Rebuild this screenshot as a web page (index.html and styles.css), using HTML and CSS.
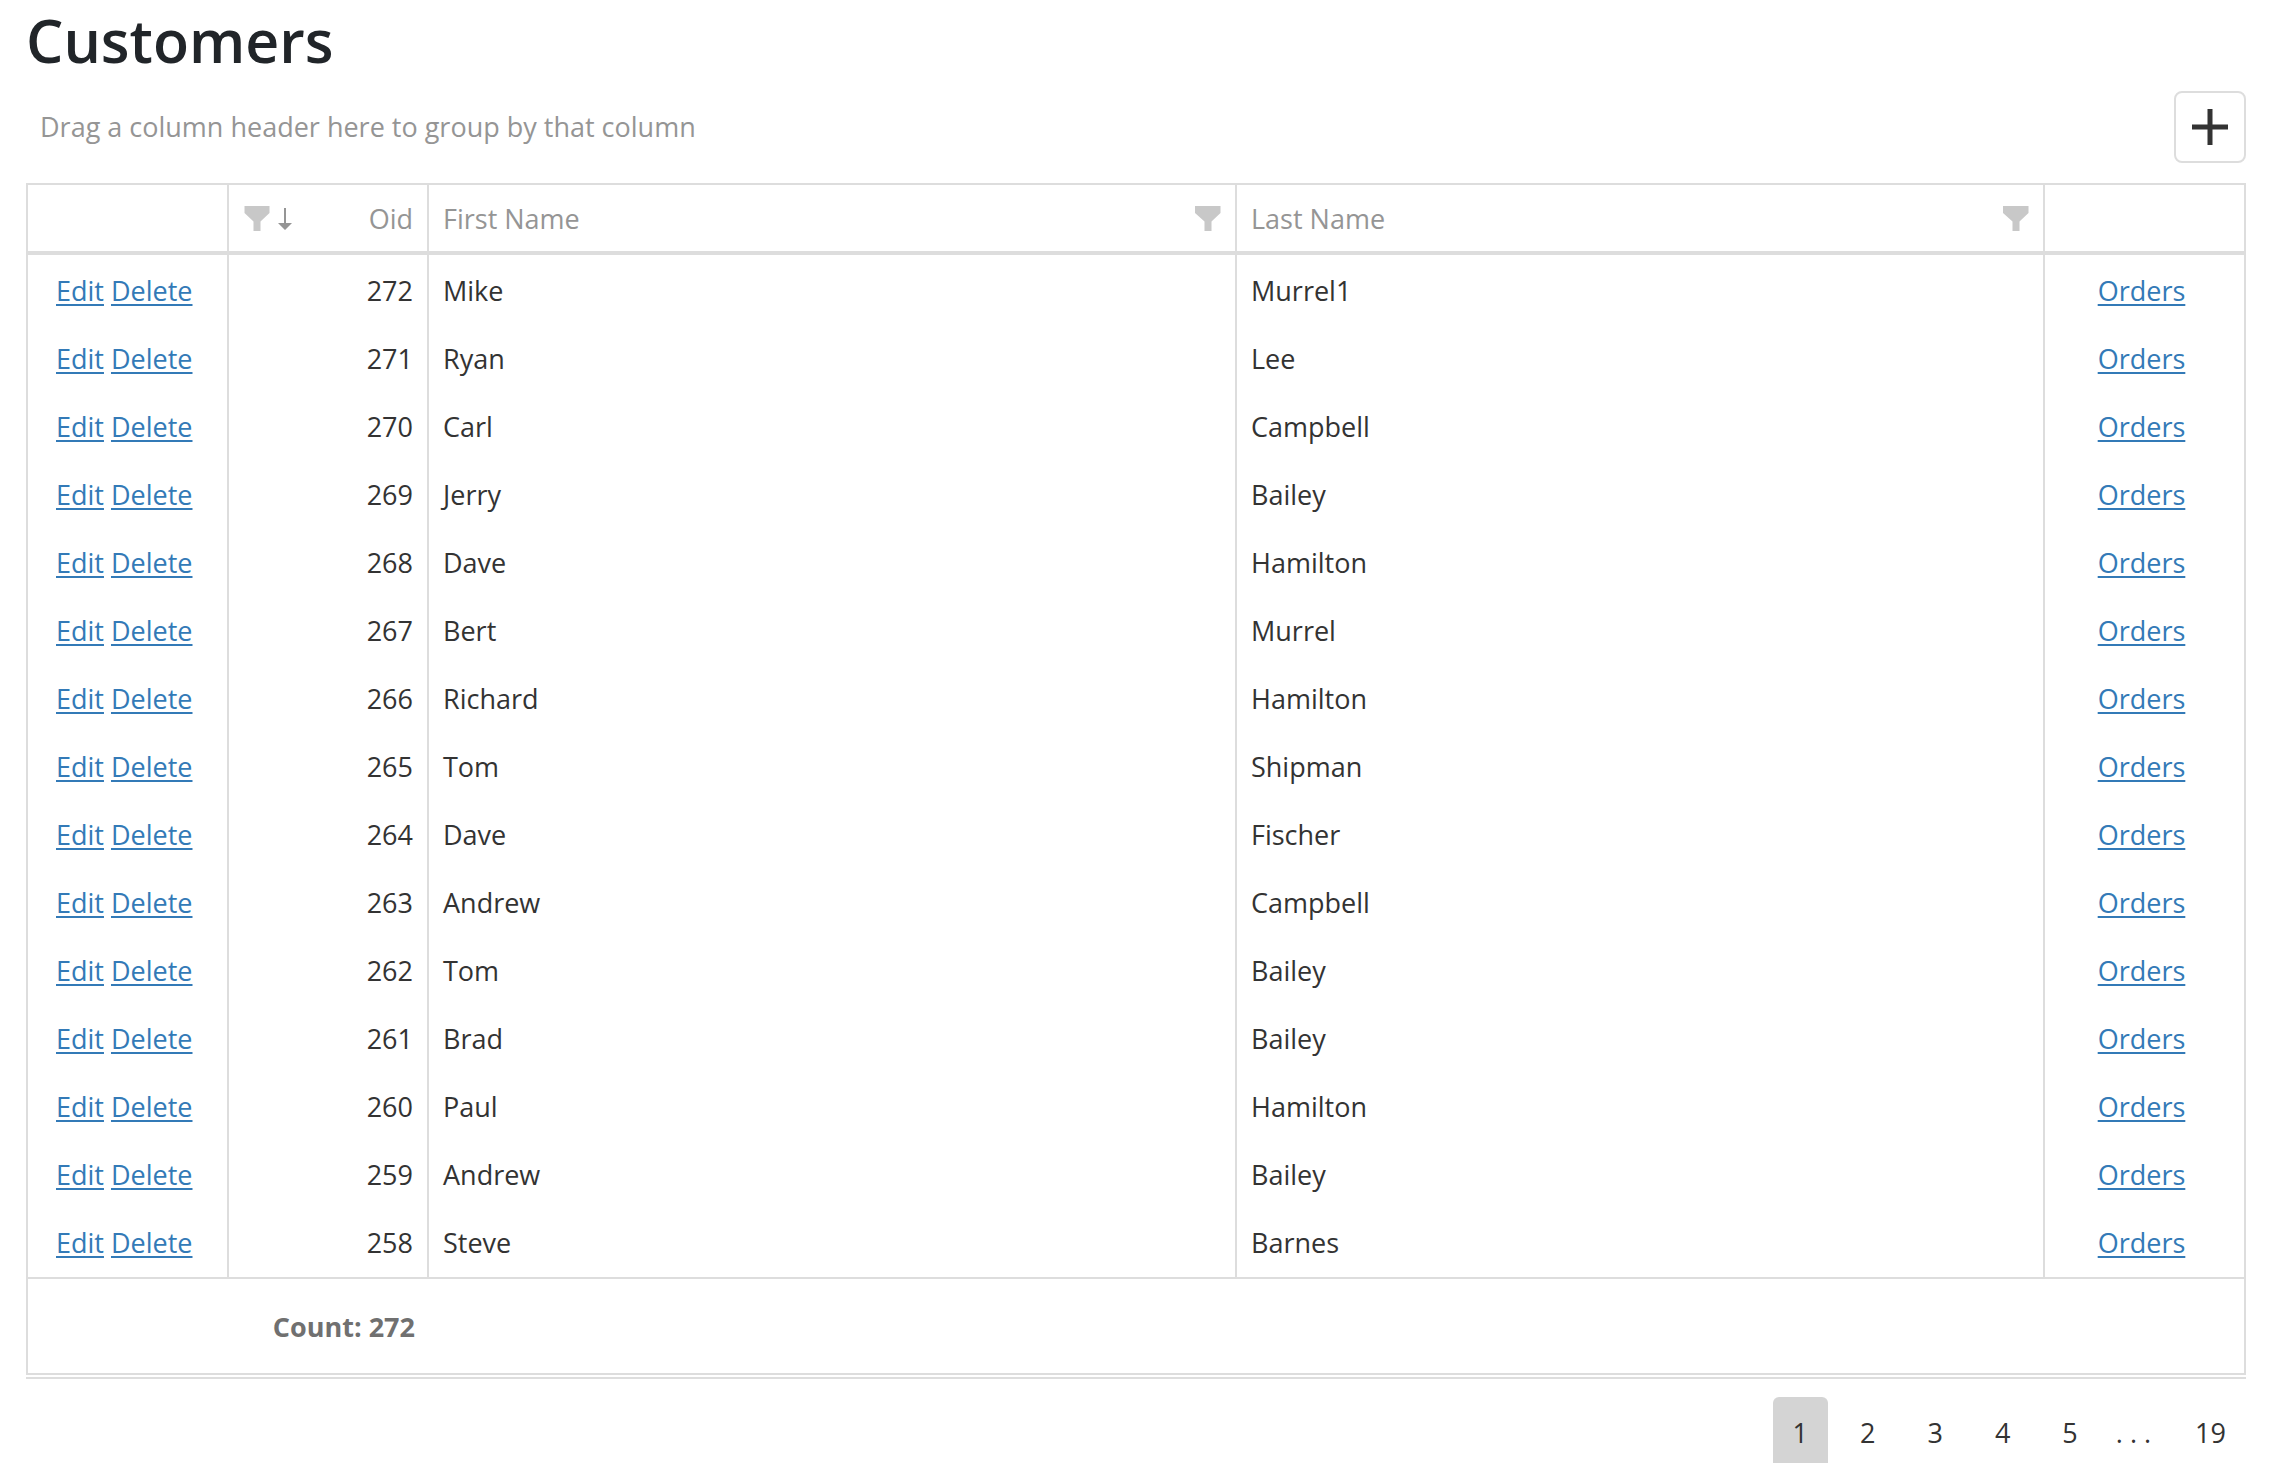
FILE: index.html
```html
<!DOCTYPE html>
<html lang="en">
<head>
<meta charset="utf-8">
<meta name="viewport" content="width=device-width, initial-scale=1">
<title>Customers</title>
<link rel="stylesheet" href="styles.css">
</head>
<body>
<main class="page">
  <h1 class="title">Customers</h1>
  <div class="toolbar">
    <p class="group-hint">Drag a column header here to group by that column</p>
    <button class="add-button" type="button" aria-label="Add customer">
      <svg width="36" height="36" viewBox="0 0 36 36" aria-hidden="true"><path d="M15.500 0h5v15.500H36v5H20.500V36h-5V20.500H0v-5h15.500z" fill="#333"/></svg>
    </button>
  </div>
  <table class="grid">
    <colgroup><col class="col-commands"><col class="col-oid"><col><col><col class="col-orders"></colgroup>
    <thead>
      <tr>
        <th></th>
        <th><div class="head"><span class="head-icons"><button class="filter" type="button" aria-label="Filter by Oid"><svg width="26" height="26" viewBox="0 0 26 26" aria-hidden="true"><path d="M0.500 0H25.500v7L16.500 15.500v9.500h-7v-9.500L0.500 7z" fill="#c8c8c8"/></svg></button><svg width="14" height="22" viewBox="0 0 14 22" aria-hidden="true"><path d="M6 0h2v15h6l-7 7-7-7h6z" fill="#959595"/></svg></span><span>Oid</span></div></th>
        <th><div class="head"><span>First Name</span><button class="filter" type="button" aria-label="Filter by First Name"><svg width="26" height="26" viewBox="0 0 26 26" aria-hidden="true"><path d="M0 0H25.500v7L16.500 15.500v9.500h-7v-9.500L0 7z" fill="#c8c8c8"/></svg></button></div></th>
        <th><div class="head"><span>Last Name</span><button class="filter" type="button" aria-label="Filter by Last Name"><svg width="26" height="26" viewBox="0 0 26 26" aria-hidden="true"><path d="M0 0H25.500v7L16.500 15.500v9.500h-7v-9.500L0 7z" fill="#c8c8c8"/></svg></button></div></th>
        <th></th>
      </tr>
    </thead>
    <tbody>
      <tr><td class="commands"><a href="#">Edit</a> <a href="#">Delete</a></td><td class="number">272</td><td>Mike</td><td>Murrel1</td><td class="orders"><a href="#">Orders</a></td></tr>
      <tr><td class="commands"><a href="#">Edit</a> <a href="#">Delete</a></td><td class="number">271</td><td>Ryan</td><td>Lee</td><td class="orders"><a href="#">Orders</a></td></tr>
      <tr><td class="commands"><a href="#">Edit</a> <a href="#">Delete</a></td><td class="number">270</td><td>Carl</td><td>Campbell</td><td class="orders"><a href="#">Orders</a></td></tr>
      <tr><td class="commands"><a href="#">Edit</a> <a href="#">Delete</a></td><td class="number">269</td><td>Jerry</td><td>Bailey</td><td class="orders"><a href="#">Orders</a></td></tr>
      <tr><td class="commands"><a href="#">Edit</a> <a href="#">Delete</a></td><td class="number">268</td><td>Dave</td><td>Hamilton</td><td class="orders"><a href="#">Orders</a></td></tr>
      <tr><td class="commands"><a href="#">Edit</a> <a href="#">Delete</a></td><td class="number">267</td><td>Bert</td><td>Murrel</td><td class="orders"><a href="#">Orders</a></td></tr>
      <tr><td class="commands"><a href="#">Edit</a> <a href="#">Delete</a></td><td class="number">266</td><td>Richard</td><td>Hamilton</td><td class="orders"><a href="#">Orders</a></td></tr>
      <tr><td class="commands"><a href="#">Edit</a> <a href="#">Delete</a></td><td class="number">265</td><td>Tom</td><td>Shipman</td><td class="orders"><a href="#">Orders</a></td></tr>
      <tr><td class="commands"><a href="#">Edit</a> <a href="#">Delete</a></td><td class="number">264</td><td>Dave</td><td>Fischer</td><td class="orders"><a href="#">Orders</a></td></tr>
      <tr><td class="commands"><a href="#">Edit</a> <a href="#">Delete</a></td><td class="number">263</td><td>Andrew</td><td>Campbell</td><td class="orders"><a href="#">Orders</a></td></tr>
      <tr><td class="commands"><a href="#">Edit</a> <a href="#">Delete</a></td><td class="number">262</td><td>Tom</td><td>Bailey</td><td class="orders"><a href="#">Orders</a></td></tr>
      <tr><td class="commands"><a href="#">Edit</a> <a href="#">Delete</a></td><td class="number">261</td><td>Brad</td><td>Bailey</td><td class="orders"><a href="#">Orders</a></td></tr>
      <tr><td class="commands"><a href="#">Edit</a> <a href="#">Delete</a></td><td class="number">260</td><td>Paul</td><td>Hamilton</td><td class="orders"><a href="#">Orders</a></td></tr>
      <tr><td class="commands"><a href="#">Edit</a> <a href="#">Delete</a></td><td class="number">259</td><td>Andrew</td><td>Bailey</td><td class="orders"><a href="#">Orders</a></td></tr>
      <tr><td class="commands"><a href="#">Edit</a> <a href="#">Delete</a></td><td class="number">258</td><td>Steve</td><td>Barnes</td><td class="orders"><a href="#">Orders</a></td></tr>
    </tbody>
    <tfoot>
      <tr><td></td><td class="number">Count: 272</td><td></td><td></td><td></td></tr>
    </tfoot>
  </table>
  <nav class="pager" aria-label="Pages">
    <button class="page-button current" type="button" aria-current="page">1</button>
    <button class="page-button" type="button">2</button>
    <button class="page-button" type="button">3</button>
    <button class="page-button" type="button">4</button>
    <button class="page-button" type="button">5</button>
    <span class="ellipsis">. . .</span>
    <button class="page-button" type="button">19</button>
  </nav>
</main>
</body>
</html>
```
FILE: styles.css
```css
* {
  box-sizing: border-box;
}

html {
  height: 100%;
}

body {
  height: 100%;
  margin: 0;
  overflow-y: auto;
  scrollbar-width: none;
  background: #fff;
  color: #333;
  font-family: "Open Sans", "Noto Sans", sans-serif;
  font-size: 27px;
  line-height: 36px;
}

.page {
  padding: 0 36px 0 26px;
}

.title {
  margin: 0;
  padding-bottom: 11px;
  color: #212529;
  font-size: 59px;
  font-weight: 600;
  line-height: 80px;
}

.toolbar {
  display: flex;
  align-items: center;
  justify-content: space-between;
  padding: 0 0 20px 14px;
}

.group-hint {
  margin: 0;
  color: #959595;
}

button {
  padding: 0;
  border: 0;
  background: none;
  color: inherit;
  font: inherit;
}

.add-button {
  display: grid;
  place-items: center;
  width: 72px;
  height: 72px;
  border: 2px solid #ddd;
  border-radius: 8px;
}

.grid {
  width: 100%;
  border: 2px solid #ddd;
  border-collapse: separate;
  border-spacing: 0;
  table-layout: fixed;
}

.col-commands {
  width: 201px;
}

.col-oid {
  width: 200px;
}

.col-orders {
  width: 199px;
}

th,
td {
  padding: 16px 14px;
  border-right: 2px solid #ddd;
  text-align: left;
}

th:last-child,
td:last-child {
  border-right: 0;
}

th {
  padding: 16px 14px 14px;
  border-bottom: 4px solid #ddd;
  color: #959595;
  font-weight: 400;
}

.head {
  display: flex;
  align-items: center;
  justify-content: space-between;
}

.head-icons {
  display: flex;
  align-items: center;
  gap: 8px;
  padding-left: 1px;
}

.filter {
  display: block;
}

.filter svg {
  display: block;
}

tbody tr:first-child td {
  padding-top: 18px;
}

td.number {
  text-align: right;
}

td.commands {
  padding-left: 28px;
  white-space: nowrap;
}

td.orders {
  padding-right: 20px;
  text-align: center;
}

a {
  color: #337ab7;
  text-decoration: underline;
  text-decoration-thickness: 2px;
  text-underline-offset: 3px;
}

tfoot td {
  padding: 30px 14px 28px;
  border-top: 2px solid #ddd;
  border-right: 0;
  color: #707070;
  font-weight: 700;
}

.pager {
  display: flex;
  align-items: center;
  justify-content: flex-end;
  gap: 12px;
  margin-top: 2px;
  padding-top: 18px;
  border-top: 2px solid #ddd;
}

.page-button {
  min-width: 55px;
  padding: 18px 20px;
  border-radius: 6px;
}

.ellipsis {
  padding: 0 12px 0 6px;
}

.current {
  background: #d4d4d4;
}
```
